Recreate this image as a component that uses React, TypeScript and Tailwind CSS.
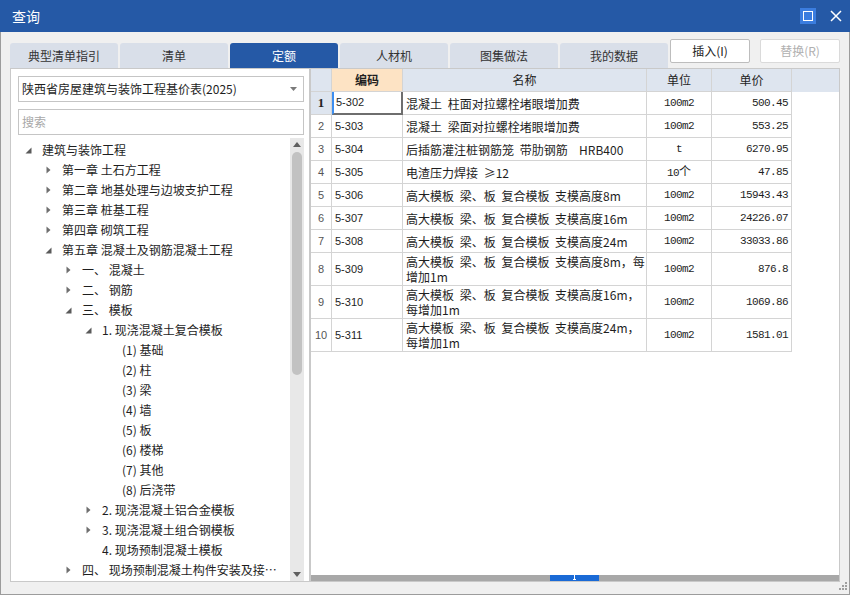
import React from "react";

const FONT = "font-['Noto_Sans_CJK_SC',sans-serif]";

const TriOpen = () => (
  <svg width="7" height="7" viewBox="0 0 7 7">
    <path d="M6.5 0.5V6.5H0.5Z" fill="#5a5a5a" />
  </svg>
);
const TriClosed = () => (
  <svg width="5" height="8" viewBox="0 0 5 8">
    <path d="M0.5 0.5L4.5 4L0.5 7.5Z" fill="#6e6e6e" />
  </svg>
);

type Node = { l: number; s: "o" | "c" | "n"; t: string };
const tree: Node[] = [
  { l: 0, s: "o", t: "建筑与装饰工程" },
  { l: 1, s: "c", t: "第一章 土石方工程" },
  { l: 1, s: "c", t: "第二章 地基处理与边坡支护工程" },
  { l: 1, s: "c", t: "第三章 桩基工程" },
  { l: 1, s: "c", t: "第四章 砌筑工程" },
  { l: 1, s: "o", t: "第五章 混凝土及钢筋混凝土工程" },
  { l: 2, s: "c", t: "一、 混凝土" },
  { l: 2, s: "c", t: "二、 钢筋" },
  { l: 2, s: "o", t: "三、 模板" },
  { l: 3, s: "o", t: "1. 现浇混凝土复合模板" },
  { l: 4, s: "n", t: "(1) 基础" },
  { l: 4, s: "n", t: "(2) 柱" },
  { l: 4, s: "n", t: "(3) 梁" },
  { l: 4, s: "n", t: "(4) 墙" },
  { l: 4, s: "n", t: "(5) 板" },
  { l: 4, s: "n", t: "(6) 楼梯" },
  { l: 4, s: "n", t: "(7) 其他" },
  { l: 4, s: "n", t: "(8) 后浇带" },
  { l: 3, s: "c", t: "2. 现浇混凝土铝合金模板" },
  { l: 3, s: "c", t: "3. 现浇混凝土组合钢模板" },
  { l: 3, s: "n", t: "4. 现场预制混凝土模板" },
  { l: 2, s: "c", t: "四、 现场预制混凝土构件安装及接头灌缝" },
];
const padCls = ["pl-[10px]", "pl-[30px]", "pl-[50px]", "pl-[70px]", "pl-[90px]"];

type Row = { n: number; code: string; name: string[]; unit: string; price: string };
const rows: Row[] = [
  { n: 1, code: "5-302", name: ["混凝土 柱面对拉螺栓堵眼增加费"], unit: "100m2", price: "500.45" },
  { n: 2, code: "5-303", name: ["混凝土 梁面对拉螺栓堵眼增加费"], unit: "100m2", price: "553.25" },
  { n: 3, code: "5-304", name: ["后插筋灌注桩钢筋笼 带肋钢筋  HRB400"], unit: "t", price: "6270.95" },
  { n: 4, code: "5-305", name: ["电渣压力焊接 ≥12"], unit: "10个", price: "47.85" },
  { n: 5, code: "5-306", name: ["高大模板 梁、板 复合模板 支模高度8m"], unit: "100m2", price: "15943.43" },
  { n: 6, code: "5-307", name: ["高大模板 梁、板 复合模板 支模高度16m"], unit: "100m2", price: "24226.07" },
  { n: 7, code: "5-308", name: ["高大模板 梁、板 复合模板 支模高度24m"], unit: "100m2", price: "33033.86" },
  { n: 8, code: "5-309", name: ["高大模板 梁、板 复合模板 支模高度8m，每", "增加1m"], unit: "100m2", price: "876.8" },
  { n: 9, code: "5-310", name: ["高大模板 梁、板 复合模板 支模高度16m，", "每增加1m"], unit: "100m2", price: "1069.86" },
  { n: 10, code: "5-311", name: ["高大模板 梁、板 复合模板 支模高度24m，", "每增加1m"], unit: "100m2", price: "1581.01" },
];

const tabs = ["典型清单指引", "清单", "定额", "人材机", "图集做法", "我的数据"];

export default function App() {
  const cell = "border-r border-b border-[#d4d4d4] shrink-0";
  return (
    <div className={`w-[850px] h-[595px] flex flex-col bg-[#f0f0f0] ${FONT} text-[12px] text-[#1e1e1e] overflow-hidden`}>
      {/* Title bar */}
      <div className="h-[32px] bg-[#2559a6] flex items-center pl-[12px] pr-[6px] shrink-0">
        <span className="text-white text-[14px] leading-none">查询</span>
        <div className="ml-auto flex items-center">
          <div className="w-[16px] h-[16px] bg-[#3b7ddf] flex items-center justify-center">
            <div className="w-[10px] h-[10px] border-[1.5px] border-white" />
          </div>
          <div className="w-[16px] h-[16px] ml-[12px] flex items-center justify-center">
            <svg width="12" height="12" viewBox="0 0 12 12">
              <path d="M1 1L11 11M11 1L1 11" stroke="white" strokeWidth="1.5" />
            </svg>
          </div>
        </div>
      </div>

      {/* Body */}
      <div className="flex-1 flex flex-col border-x border-b border-[#9c9c9c] pl-[9px] relative">
        {/* Tab row */}
        <div className="mt-[7px] h-[29px] flex items-end shrink-0">
          <div className="flex gap-[2px]">
            {tabs.map((t, i) => (
              <div
                key={t}
                className={`w-[108px] h-[25px] rounded-t-[3px] flex items-center justify-center leading-none ${
                  i === 2 ? "bg-[#2559a6] text-white" : "bg-[#d9dfe9] text-[#333]"
                }`}
              >
                {t}
              </div>
            ))}
          </div>
          <div className="self-start ml-[2px] w-[80px] h-[24px] bg-white border border-[#bdbdbd] rounded-[2px] flex items-center justify-center text-[#222] leading-none">
            插入(I)
          </div>
          <div className="self-start ml-[10px] w-[80px] h-[24px] bg-white border border-[#dadada] rounded-[2px] flex items-center justify-center text-[#b0b0b0] leading-none">
            替换(R)
          </div>
        </div>

        {/* Panels */}
        <div className="h-[514px] flex shrink-0">
          {/* Left panel */}
          <div className="w-[300px] h-full bg-white border border-[#c9c9c9] flex flex-col">
            <div className="mt-[7px] ml-[7px] mr-[5px] h-[26px] border border-[#c5c5c5] flex items-center pl-[3px] pr-[6px]">
              <span className="leading-none text-[#1e1e1e]">陕西省房屋建筑与装饰工程基价表(2025)</span>
              <svg className="ml-auto" width="7" height="4" viewBox="0 0 7 4">
                <path d="M0 0H7L3.5 4Z" fill="#7a7a7a" />
              </svg>
            </div>
            <div className="mt-[7px] ml-[7px] mr-[5px] h-[26px] border border-[#c5c5c5] flex items-center pl-[3px]">
              <span className="leading-none text-[#a8a8a8]">搜索</span>
            </div>
            <div className="mt-[3px] flex-1 flex min-h-0">
              <div className="flex-1 min-w-0 flex flex-col pt-[2px]">
                {tree.map((n, i) => (
                  <div key={i} className={`h-[20px] flex items-center shrink-0 ${padCls[n.l]}`}>
                    <span className="w-[14px] mr-[7px] flex justify-center shrink-0">
                      {n.s === "o" ? <TriOpen /> : n.s === "c" ? <TriClosed /> : null}
                    </span>
                    <span className="truncate leading-[20px] pr-[2px]">{n.t}</span>
                  </div>
                ))}
              </div>
              <div className="w-[14px] bg-[#e8e8e8] flex flex-col items-center shrink-0">
                <svg className="mt-[4px]" width="8" height="5" viewBox="0 0 8 5">
                  <path d="M0 5H8L4 0Z" fill="#606060" />
                </svg>
                <div className="mt-[5px] w-[10px] h-[223px] rounded-full bg-[#c2c2c2]" />
                <svg className="mt-auto mb-[4px]" width="8" height="5" viewBox="0 0 8 5">
                  <path d="M0 0H8L4 5Z" fill="#606060" />
                </svg>
              </div>
              <div className="w-[5px] shrink-0" />
            </div>
          </div>

          {/* Right panel */}
          <div className="w-[530px] h-full bg-white border border-[#c9c9c9] flex flex-col">
            <div className="flex flex-col">
              {/* header */}
              <div className="flex h-[23px] bg-[#dee5ef]">
                <div className={`${cell} w-[21px] border-[#c8ced8]`} />
                <div className={`${cell} w-[71px] bg-[#fde3c4] border-[#c8ced8] flex items-center justify-center font-bold`}>编码</div>
                <div className={`${cell} w-[244px] border-[#c8ced8] flex items-center justify-center`}>名称</div>
                <div className={`${cell} w-[65px] border-[#c8ced8] flex items-center justify-center`}>单位</div>
                <div className={`${cell} w-[80px] border-[#c8ced8] flex items-center justify-center`}>单价</div>
              </div>
              {rows.map((r) => {
                const h = r.name.length > 1 ? "h-[33px]" : "h-[23px]";
                return (
                  <div key={r.n} className={`flex ${h}`}>
                    <div
                      className={`${cell} w-[21px] flex items-center justify-center ${
                        r.n === 1
                          ? "bg-[#dee5ef] font-bold font-['Liberation_Serif',serif] text-[13px] text-[#222]"
                          : "font-['Liberation_Sans',sans-serif] text-[11px] text-[#555]"
                      }`}
                    >
                      {r.n}
                    </div>
                    <div
                      className={`${cell} w-[71px] flex items-center pl-[2px] font-['Liberation_Sans',sans-serif] text-[11px] ${
                        r.n === 1 ? "border-l-2 border-l-[#3d8ef0] border-r-2 border-r-[#6e6e6e] border-b-2 border-b-[#6e6e6e]" : "pl-[3px]"
                      }`}
                    >
                      {r.code}
                    </div>
                    <div className={`${cell} w-[244px] flex flex-col justify-center pl-[3px] leading-[15px] whitespace-pre [word-spacing:3px]`}>
                      {r.name.map((l, i) => (
                        <span key={i}>{l}</span>
                      ))}
                    </div>
                    <div className={`${cell} w-[65px] flex items-center justify-center font-['Liberation_Mono',monospace] text-[11px] tracking-[-0.6px]`}>
                      {r.unit === "10个" ? (
                        <span>
                          10<span className={`${FONT} text-[12px] tracking-normal`}>个</span>
                        </span>
                      ) : (
                        r.unit
                      )}
                    </div>
                    <div className={`${cell} w-[80px] flex items-center justify-end pr-[3px] font-['Liberation_Mono',monospace] text-[11px] tracking-[-0.6px]`}>
                      {r.price}
                    </div>
                  </div>
                );
              })}
            </div>
            <div className="flex-1" />
            <div className="h-[6px] bg-[#a8a8a8] flex shrink-0">
              <div className="ml-[239px] w-[49px] h-full bg-[#1a6ad6] flex items-start justify-center">
                <svg width="5" height="5" viewBox="0 0 5 5">
                  <path d="M2.5 0V4M1 4.5H4" stroke="white" strokeWidth="1" />
                </svg>
              </div>
            </div>
          </div>
        </div>

        {/* resize grip */}
        <svg className="absolute right-[1px] bottom-[3px]" width="9" height="9" viewBox="0 0 9 9">
          <rect x="6" y="0" width="2" height="2" fill="#a0a0a0" />
          <rect x="3" y="3" width="2" height="2" fill="#a0a0a0" />
          <rect x="6" y="3" width="2" height="2" fill="#a0a0a0" />
          <rect x="0" y="6" width="2" height="2" fill="#a0a0a0" />
          <rect x="3" y="6" width="2" height="2" fill="#a0a0a0" />
          <rect x="6" y="6" width="2" height="2" fill="#a0a0a0" />
        </svg>
      </div>
    </div>
  );
}
